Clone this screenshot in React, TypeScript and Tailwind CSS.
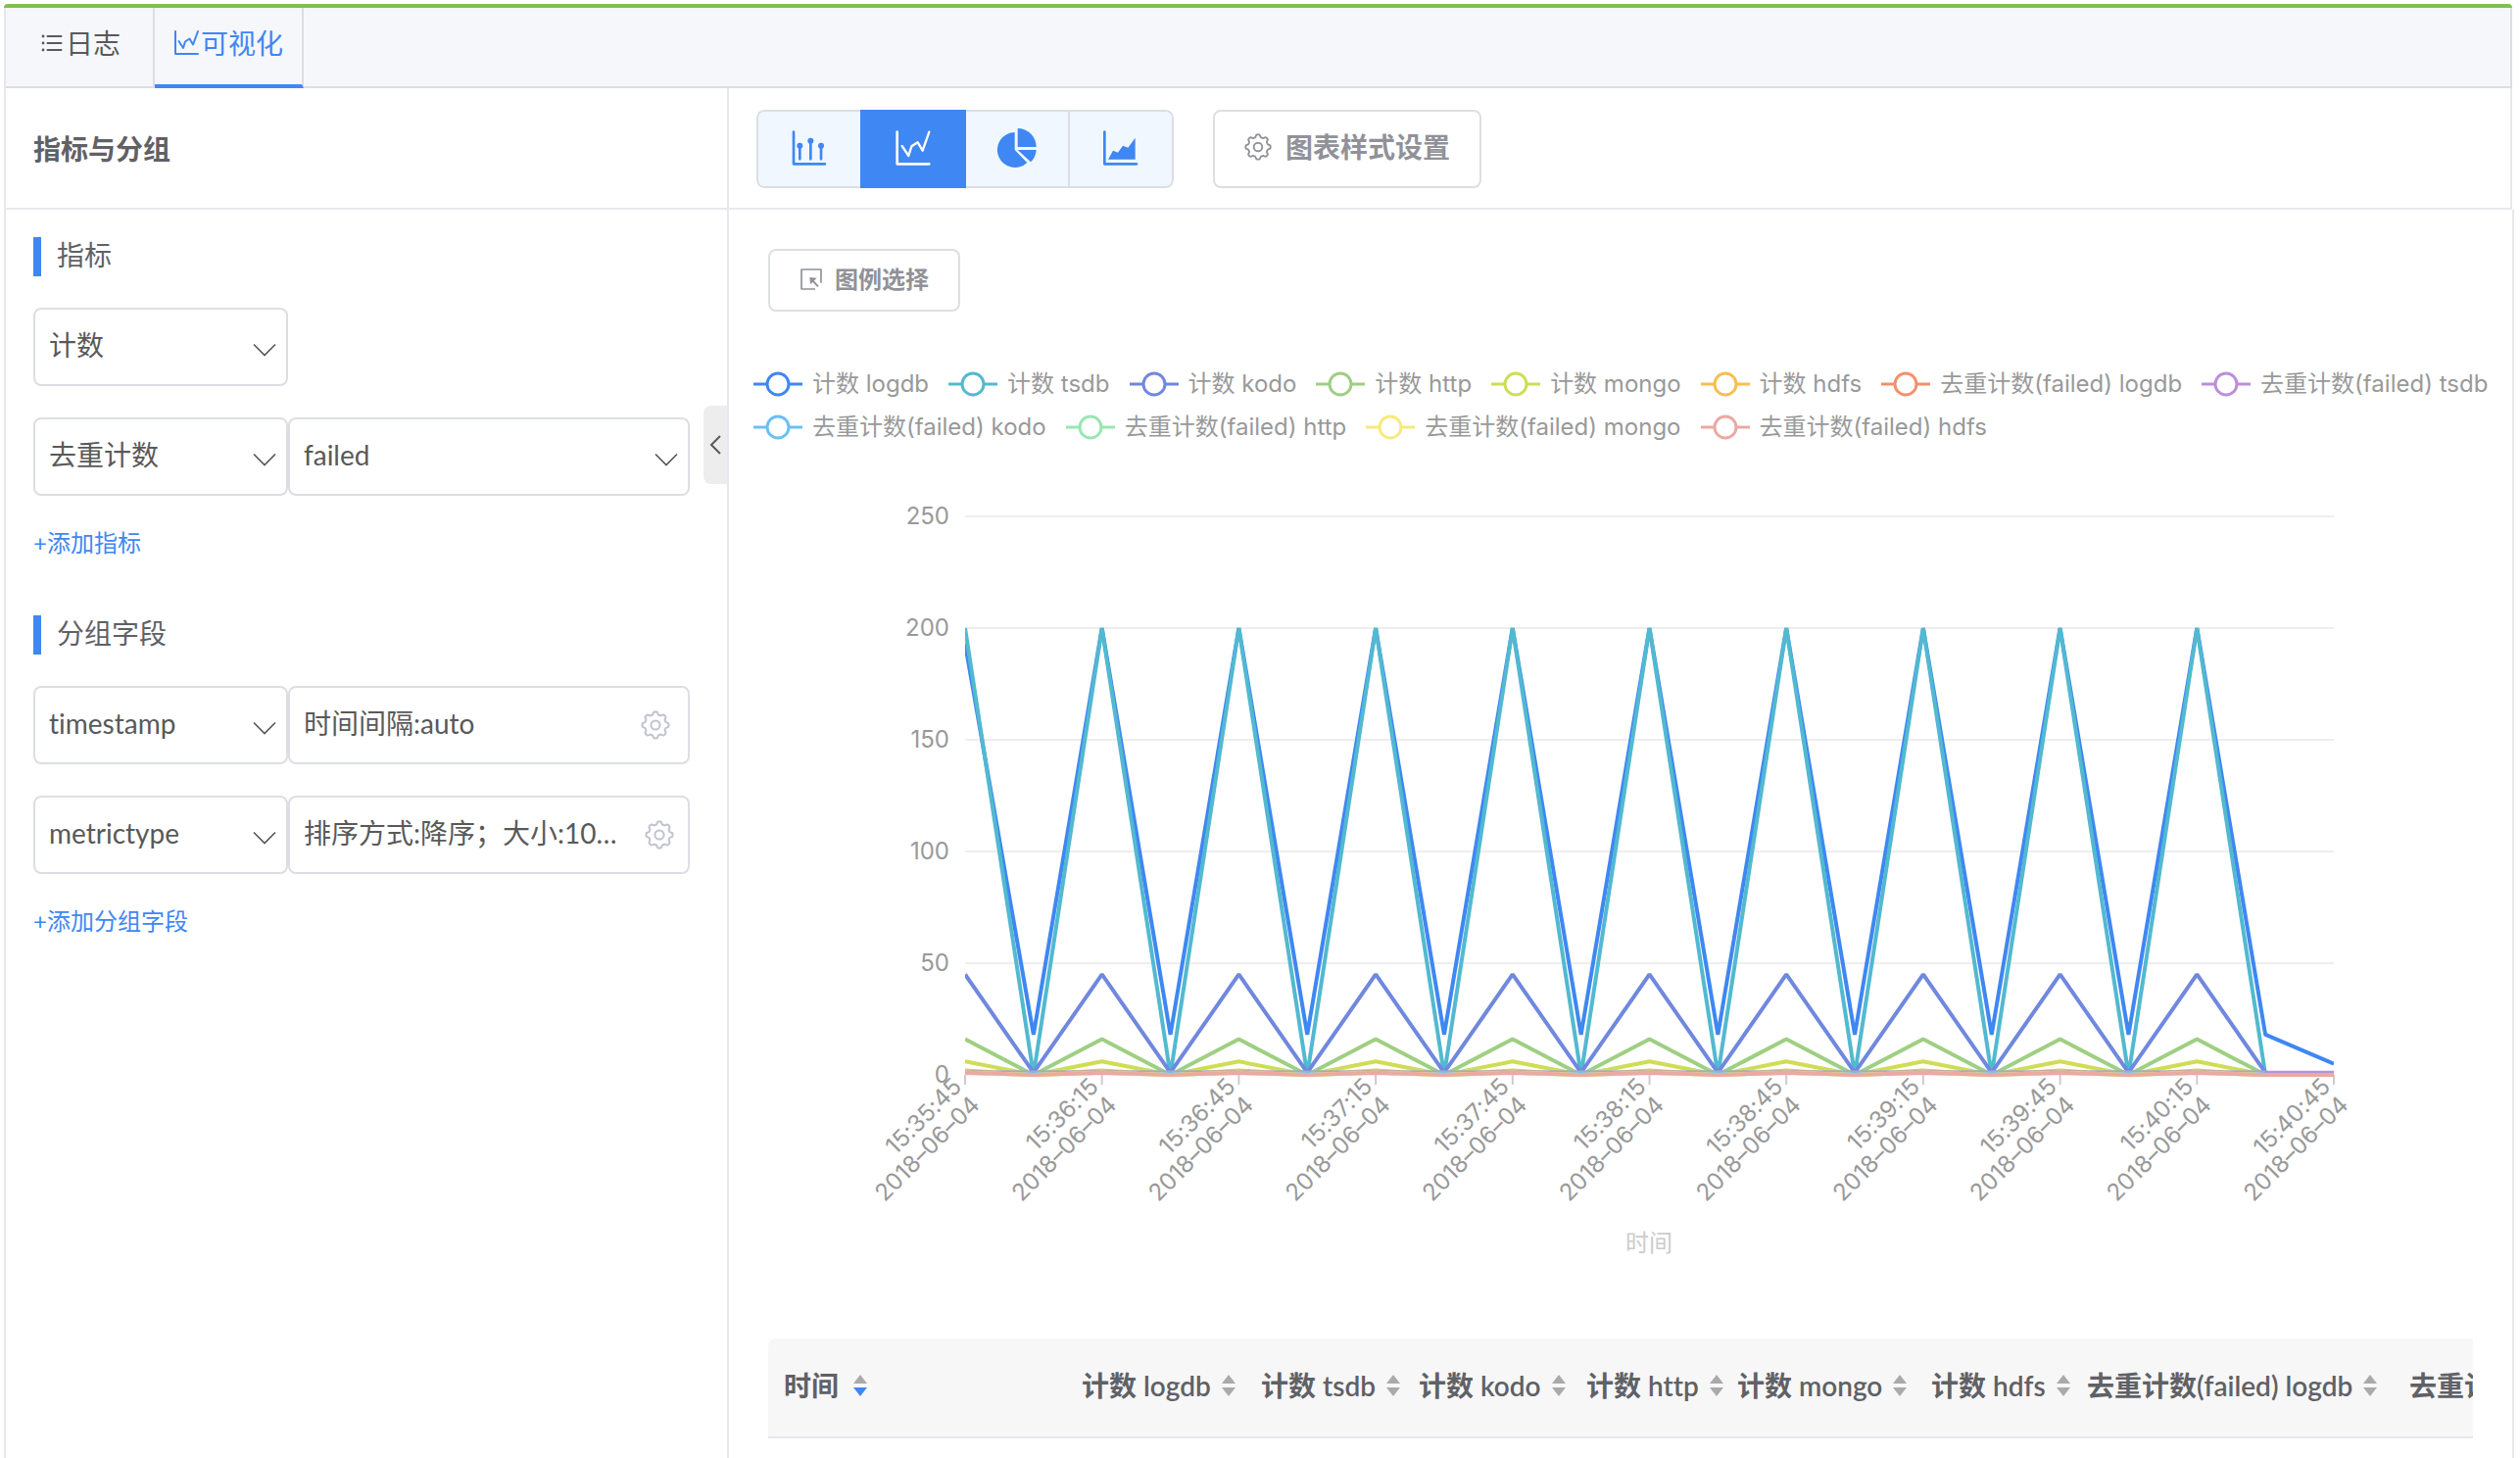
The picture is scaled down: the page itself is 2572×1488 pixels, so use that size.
import type { ReactNode } from 'react'
import clsx from 'clsx'

type Series = { name: string; color: string; data: number[] }

// The log samples come every 15s and alternate between a peak and a trough.
const alternate = (peak: number, trough: number, tail: number[]) => [
  ...Array.from({ length: 19 }, (_, i) => (i % 2 ? trough : peak)),
  ...tail,
]

const SERIES: Series[] = [
  { name: '计数 logdb', color: '#3f87f2', data: [193, ...alternate(200, 18, [18, 5]).slice(1)] },
  { name: '计数 tsdb', color: '#52b9d0', data: alternate(200, 0, [0]) },
  { name: '计数 kodo', color: '#7088de', data: alternate(45, 1, [1]) },
  { name: '计数 http', color: '#9fcf82', data: alternate(16, 0, [0]) },
  { name: '计数 mongo', color: '#cfdd55', data: alternate(6, 0, [0]) },
  { name: '计数 hdfs', color: '#f7bf4f', data: alternate(2, 0, [0]) },
  { name: '去重计数(failed) logdb', color: '#f2916d', data: alternate(1, 1, [1]) },
  { name: '去重计数(failed) tsdb', color: '#bb8fdb', data: alternate(1, 1, [1, 1]) },
  { name: '去重计数(failed) kodo', color: '#6bc0f3', data: alternate(1, 1, [1]) },
  { name: '去重计数(failed) http', color: '#9ae6b3', data: alternate(1, 0, [0, 0]) },
  { name: '去重计数(failed) mongo', color: '#f8e97c', data: alternate(1, 0, [0, 0]) },
  { name: '去重计数(failed) hdfs', color: '#eba9a2', data: alternate(1, 0, [0, 0]) },
]

const TIMES = [
  '15:35:45', '15:36:15', '15:36:45', '15:37:15', '15:37:45', '15:38:15',
  '15:38:45', '15:39:15', '15:39:45', '15:40:15', '15:40:45',
]

const COLUMNS = [
  { name: '计数 logdb', width: 'w-[183px]' },
  { name: '计数 tsdb', width: 'w-[161px]' },
  { name: '计数 kodo', width: 'w-[171px]' },
  { name: '计数 http', width: 'w-[154px]' },
  { name: '计数 mongo', width: 'w-[198px]' },
  { name: '计数 hdfs', width: 'w-[159px]' },
  { name: '去重计数(failed) logdb', width: 'w-[329px]' },
  { name: '去重计数(failed) tsdb', width: 'w-[320px]' },
]

// Eight soft teeth around a ring
const GEAR_PATH =
  Array.from({ length: 96 }, (_, i) => {
    const a = (i / 96) * Math.PI * 2
    const r = 12.2 + 1.4 * Math.tanh(2.2 * Math.cos(8 * a))
    return `${i ? 'L' : 'M'}${(15 + r * Math.cos(a)).toFixed(2)} ${(15 + r * Math.sin(a)).toFixed(2)}`
  }).join('') + 'Z'

function GearIcon({ className }: { className?: string }) {
  return (
    <svg viewBox="0 0 30 30" fill="none" stroke="currentColor" strokeWidth="2" strokeLinejoin="round" className={className} aria-hidden="true">
      <path d={GEAR_PATH} />
      <circle cx="15" cy="15" r="4.6" />
    </svg>
  )
}

function ListIcon() {
  return (
    <svg viewBox="0 0 28 28" className="size-7" aria-hidden="true">
      {[6, 13, 20].map((y) => (
        <g key={y} fill="currentColor">
          <circle cx="5" cy={y + 1} r="1.4" />
          <rect x="8.5" y={y} width="16" height="2" rx="1" />
        </g>
      ))}
    </svg>
  )
}

function TrendIcon() {
  return (
    <svg viewBox="0 0 28 28" className="size-7" fill="none" stroke="currentColor" strokeWidth="2" strokeLinecap="round" strokeLinejoin="round" aria-hidden="true">
      <path d="M2 2V25H25" />
      <path d="M5.500 12L10 19L12 12.500L16.500 9.500L20 15.500L25 2" />
    </svg>
  )
}

const CHART_TYPES = [
  {
    label: '柱状图',
    viewBox: '132 90 132 132',
    icon: (
      <>
        <path d="M150 104V202H246" strokeWidth="8" />
        <path d="M169 148V187M202 134V187M234 148V187" strokeWidth="8" />
        <g fill="currentColor" stroke="none">
          <circle cx="169" cy="146" r="9" />
          <circle cx="202" cy="131" r="9" />
          <circle cx="234" cy="146" r="9" />
        </g>
      </>
    ),
  },
  {
    label: '折线图',
    viewBox: '450 90 132 132',
    icon: (
      <>
        <path d="M467 104V202H565" strokeWidth="8" />
        <path d="M482 147L502 177L511 148L530 136L545 161L565 104" strokeWidth="7" />
      </>
    ),
  },
  {
    label: '饼图',
    viewBox: '769 90 132 132',
    icon: (
      <g fill="currentColor" stroke="none">
        <path d="M828 105A54 54 0 1 0 866 198L828 159Z" />
        <path d="M837 93A57 57 0 0 1 894 150H837Z" />
        <path d="M837 159H894A57 57 0 0 1 877 196Z" />
      </g>
    ),
  },
  {
    label: '面积图',
    viewBox: '1087 90 132 132',
    icon: (
      <>
        <path d="M1103 104V202H1201" strokeWidth="8" />
        <path d="M1114 188L1129 161L1144 167L1159 146L1175 152L1197 122V188Z" fill="currentColor" stroke="none" />
      </>
    ),
  },
]

function SelectBox({ label, value, className }: { label: string; value: string; className: string }) {
  return (
    <div className={clsx('relative h-20', className)}>
      <select
        aria-label={label}
        defaultValue={value}
        className="h-full w-full appearance-none rounded-lg border-2 border-[#dddee5] bg-white pr-14 pb-1 pl-3.5 text-[28px] text-[#595959]"
      >
        <option>{value}</option>
      </select>
      <svg viewBox="0 0 24 14" className="pointer-events-none absolute top-9 right-3 h-3.5 w-6" fill="none" stroke="#595959" strokeWidth="1.700" aria-hidden="true">
        <path d="M1 1.500L12 12.500L23 1.500" />
      </svg>
    </div>
  )
}

function SettingBox({ label, children, tight }: { label: string; children: ReactNode; tight?: boolean }) {
  return (
    <div className={clsx('flex h-20 flex-1 items-center justify-between rounded-lg border-2 border-[#dddee5] pl-3.5 text-[28px] text-[#595959]', tight ? 'pr-3.5' : 'pr-[18px]')}>
      <span className="w-[330px] truncate pb-1">{children}</span>
      <button type="button" aria-label={label} className="text-[#c0c4d0]">
        <GearIcon className="size-[30px]" />
      </button>
    </div>
  )
}

function SectionTitle({ children }: { children: ReactNode }) {
  return (
    <h3 className="flex h-10 items-center border-l-8 border-[#3f87f2] pb-1 pl-4 text-[28px] text-[#5f6166]">
      {children}
    </h3>
  )
}

function Sidebar() {
  return (
    <aside className="relative w-[738px] shrink-0 border-r-2 border-[#e7e8ee]">
      <h2 className="flex h-[124px] items-center border-b-2 border-[#e7e8ee] pt-0.5 pl-7 text-[28px] font-bold text-[#5f6166]">
        指标与分组
      </h2>
      <div className="pt-7 pr-[38px] pl-7">
        <SectionTitle>指标</SectionTitle>
        <div className="mt-8 flex flex-col gap-8">
          <SelectBox label="指标" value="计数" className="w-[260px]" />
          <div className="flex">
            <SelectBox label="指标" value="去重计数" className="w-[260px]" />
            <SelectBox label="字段" value="failed" className="flex-1" />
          </div>
        </div>
        <button type="button" className="mt-[30px] block h-9 text-[24px] leading-9 text-[#3f87f2]">
          +添加指标
        </button>

        <div className="mt-14">
          <SectionTitle>分组字段</SectionTitle>
        </div>
        <div className="mt-8 flex flex-col gap-8">
          <div className="flex">
            <SelectBox label="分组字段" value="timestamp" className="w-[260px]" />
            <SettingBox label="时间间隔设置">时间间隔:auto</SettingBox>
          </div>
          <div className="flex">
            <SelectBox label="分组字段" value="metrictype" className="w-[260px]" />
            <SettingBox label="排序设置" tight>排序方式:降序；大小:10…</SettingBox>
          </div>
        </div>
        <button type="button" className="mt-[30px] block h-9 text-[24px] leading-9 text-[#3f87f2]">
          +添加分组字段
        </button>
      </div>

      <button type="button" aria-label="收起" className="absolute top-[324px] right-0 flex h-20 w-6 items-center justify-center rounded-l-lg bg-[#ededed]">
        <svg viewBox="0 0 12 20" className="h-5 w-3" fill="none" stroke="#595959" strokeWidth="2" aria-hidden="true">
          <path d="M11 1L2 10L11 19" />
        </svg>
      </button>
    </aside>
  )
}

function Toolbar() {
  return (
    <div className="mr-0.5 flex h-[124px] items-center gap-10 border-r-2 border-b-2 border-[#e7e8ee] pt-0.5 pl-7">
      <div className="flex h-20 overflow-hidden rounded-lg">
        {CHART_TYPES.map((type, i) => {
          const active = i === 1
          return (
            <button
              key={type.label}
              type="button"
              aria-label={type.label}
              className={clsx(
                'flex items-center justify-center border-y-2',
                active ? 'w-[108px] border-[#3f87f2] bg-[#3f87f2] text-white' : 'w-[106px] border-[#dcdee4] bg-[#f0f7ff] text-[#3f87f2]',
                i === 0 && 'rounded-l-lg border-l-2',
                i >= 2 && 'border-r-2',
                i === 3 && 'rounded-r-lg',
              )}
            >
              <svg viewBox={type.viewBox} className="size-11" fill="none" stroke="currentColor" strokeLinecap="round" strokeLinejoin="round" aria-hidden="true">
                {type.icon}
              </svg>
            </button>
          )
        })}
      </div>
      <button type="button" className="flex h-20 items-center gap-3.5 rounded-lg border-2 border-[#dddee5] px-[30px] pb-1 text-[28px] font-semibold text-[#909298]">
        <GearIcon className="size-7" />
        图表样式设置
      </button>
    </div>
  )
}

function Legend() {
  return (
    <ul className="mt-[52px] flex flex-wrap gap-x-5 pl-[25px] font-[Inter,'Noto_Sans_CJK_SC',sans-serif] text-[24px] leading-[44px] text-[#999999]">
      {SERIES.map((s) => (
        <li key={s.name} className="flex items-center gap-2.5 whitespace-nowrap">
          <svg viewBox="0 0 50 28" className="h-7 w-[50px]" fill="white" stroke={s.color} strokeWidth="3" aria-hidden="true">
            <path d="M0 14H50" />
            <circle cx="25" cy="14" r="11" />
          </svg>
          {s.name}
        </li>
      ))}
    </ul>
  )
}

const PLOT = { left: 241, right: 1638, top: 69, bottom: 639 }
const px = (i: number) => PLOT.left + (i * (PLOT.right - PLOT.left)) / 20
const py = (v: number) => PLOT.bottom - (v * (PLOT.bottom - PLOT.top)) / 250

function LineChart() {
  return (
    <svg viewBox="0 0 1820 908" className="block h-auto w-full" role="img" aria-label="时间">
      <defs>
        <clipPath id="plot">
          <rect x={PLOT.left} y={PLOT.top - 4} width={PLOT.right - PLOT.left} height={PLOT.bottom - PLOT.top + 10} />
        </clipPath>
      </defs>
      <g className="font-[Inter,'Liberation_Sans',sans-serif] text-[24px]" fill="#999999" textAnchor="end">
        {[0, 50, 100, 150, 200, 250].map((v) => (
          <g key={v}>
            <path d={`M${PLOT.left} ${py(v)}H${PLOT.right}`} stroke="#eeeeee" strokeWidth="2" />
            <text x={PLOT.left - 16} y={py(v) + 8}>{v}</text>
          </g>
        ))}
        {TIMES.map((t, i) => (
          <g key={t}>
            <path d={`M${px(i * 2)} ${PLOT.bottom}v10`} stroke="#cccccc" strokeWidth="2" />
            <g transform={`translate(${px(i * 2)} ${PLOT.bottom + 10}) rotate(-45)`}>
              <text x="-4" y="1">{t}</text>
              <text x="-4" y="27">2018–06–04</text>
            </g>
          </g>
        ))}
      </g>
      <g clipPath="url(#plot)" fill="none" strokeWidth="4" strokeLinejoin="bevel">
        {SERIES.map((s) => (
          <polyline key={s.name} stroke={s.color} points={s.data.map((v, i) => `${px(i)},${py(v)}`).join(' ')} />
        ))}
      </g>
      <text x="939" y="819" textAnchor="middle" fill="#cccccc" className="text-[24px]">时间</text>
    </svg>
  )
}

function SortIcon({ desc }: { desc?: boolean }) {
  return (
    <svg viewBox="0 0 16 24" className="h-6 w-4" aria-hidden="true">
      <path d="M8 1L15 10H1Z" fill="#aaaaaa" />
      <path d="M8 23L15 14H1Z" fill={desc ? '#3f87f2' : '#aaaaaa'} />
    </svg>
  )
}

function ResultTable() {
  return (
    <div className="mx-10 overflow-hidden rounded-tl-lg">
      <table className="w-[1979px] table-fixed border-b-2 border-[#e7e8ee] bg-[#f7f7f7] text-left text-[28px] text-[#5f6166]">
        <thead>
          <tr className="h-[101px]">
            <th scope="col" className="w-[304px] pb-1 pl-4 font-semibold">
              <button type="button" className="flex items-center gap-3.5">
                时间 <SortIcon desc />
              </button>
            </th>
            {COLUMNS.map((c) => (
              <th key={c.name} scope="col" className={clsx('pb-1 pl-4 font-semibold', c.width)}>
                <button type="button" className="flex items-center gap-2.5 whitespace-nowrap">
                  {c.name} <SortIcon />
                </button>
              </th>
            ))}
          </tr>
        </thead>
      </table>
    </div>
  )
}

export default function App() {
  return (
    <div className="flex min-h-screen flex-col bg-white pt-1 pr-1.5 pl-1 font-[Lato,'Noto_Sans_CJK_SC',sans-serif] [font-variant-ligatures:none]">
      <div className="mr-0.5 h-1 rounded-t-sm bg-[#7fc050]" />
      <div className="flex flex-1 flex-col border-l-2 border-[#e7e8ee]">
        <nav className="mr-0.5 flex h-[82px] border-r-2 border-b-2 border-[#dcdee4] bg-[#f5f7fb] text-[28px]">
          <a href="#logs" className="flex w-[152px] items-center justify-center border-r-2 border-[#dcdee4] pb-2 text-[#595959]">
            <ListIcon />
            日志
          </a>
          <a href="#visualize" className="-mb-0.5 flex w-[152px] items-center justify-center border-r-2 border-b-4 border-r-[#dcdee4] border-b-[#3f87f2] pb-1.5 text-[#3f87f2]">
            <TrendIcon />
            可视化
          </a>
        </nav>
        <div className="flex flex-1">
          <Sidebar />
          <main className="flex min-w-0 flex-1 flex-col">
            <Toolbar />
            <div className="flex-1 border-r-2 border-[#e7e8ee]">
              <button type="button" className="mt-10 ml-10 flex h-16 items-center gap-3 rounded-lg border-2 border-[#dddee5] px-[30px] pb-0.5 text-[24px] font-semibold text-[#909298]">
                <svg viewBox="168 519 72 72" className="size-6" fill="none" stroke="currentColor" strokeWidth="5" strokeLinejoin="round" aria-hidden="true">
                  <path d="M216 585H174V525H234V566" />
                  <path d="M206 557L225 577" strokeWidth="6" />
                  <path d="M199 549L221 551L201 571Z" fill="currentColor" stroke="none" />
                </svg>
                图例选择
              </button>
              <Legend />
              <LineChart />
              <ResultTable />
            </div>
          </main>
        </div>
      </div>
    </div>
  )
}
